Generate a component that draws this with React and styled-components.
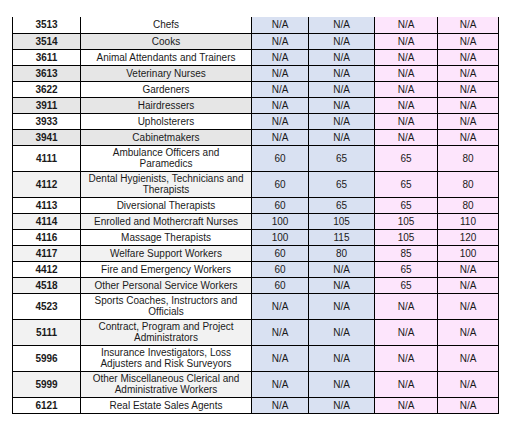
import React from 'react';
import styled, { createGlobalStyle } from 'styled-components';

const GlobalStyle = createGlobalStyle`
  body {
    margin: 0;
    background: #ffffff;
    font-family: 'Liberation Sans', Arial, sans-serif;
  }
`;

const Page = styled.div`
  width: 515px;
  height: 438px;
  padding: 17px 0 0 12px;
  box-sizing: border-box;
  overflow: hidden;
`;

const Table = styled.table`
  border-collapse: collapse;
  table-layout: fixed;
  width: 486px;
  font-size: 10px;
  color: #1a1a1a;
`;

const Col = styled.col`
  width: ${(props) => props.w}px;
`;

const Row = styled.tr`
  height: ${(props) => (props.tall ? '26px' : '16px')};
`;

const Cell = styled.td`
  border: 1px solid #000;
  border-top: ${(props) => (props.first ? 'none' : '1px solid #000')};
  padding: 0 2px;
  line-height: 11px;
  text-align: center;
  vertical-align: middle;
  white-space: nowrap;
  background: ${(props) => props.bg};
`;

const Code = styled(Cell)`
  font-weight: bold;
`;

const widths = [68, 171, 57, 66, 63, 61];

const data = [
  ['3513', ['Chefs'], 'N/A', 'N/A', 'N/A', 'N/A'],
  ['3514', ['Cooks'], 'N/A', 'N/A', 'N/A', 'N/A'],
  ['3611', ['Animal Attendants and Trainers'], 'N/A', 'N/A', 'N/A', 'N/A'],
  ['3613', ['Veterinary Nurses'], 'N/A', 'N/A', 'N/A', 'N/A'],
  ['3622', ['Gardeners'], 'N/A', 'N/A', 'N/A', 'N/A'],
  ['3911', ['Hairdressers'], 'N/A', 'N/A', 'N/A', 'N/A'],
  ['3933', ['Upholsterers'], 'N/A', 'N/A', 'N/A', 'N/A'],
  ['3941', ['Cabinetmakers'], 'N/A', 'N/A', 'N/A', 'N/A'],
  ['4111', ['Ambulance Officers and', 'Paramedics'], '60', '65', '65', '80'],
  ['4112', ['Dental Hygienists, Technicians and', 'Therapists'], '60', '65', '65', '80'],
  ['4113', ['Diversional Therapists'], '60', '65', '65', '80'],
  ['4114', ['Enrolled and Mothercraft Nurses'], '100', '105', '105', '110'],
  ['4116', ['Massage Therapists'], '100', '115', '105', '120'],
  ['4117', ['Welfare Support Workers'], '60', '80', '85', '100'],
  ['4412', ['Fire and Emergency Workers'], '60', 'N/A', '65', 'N/A'],
  ['4518', ['Other Personal Service Workers'], '60', 'N/A', '65', 'N/A'],
  ['4523', ['Sports Coaches, Instructors and', 'Officials'], 'N/A', 'N/A', 'N/A', 'N/A'],
  ['5111', ['Contract, Program and Project', 'Administrators'], 'N/A', 'N/A', 'N/A', 'N/A'],
  ['5996', ['Insurance Investigators, Loss', 'Adjusters and Risk Surveyors'], 'N/A', 'N/A', 'N/A', 'N/A'],
  ['5999', ['Other Miscellaneous Clerical and', 'Administrative Workers'], 'N/A', 'N/A', 'N/A', 'N/A'],
  ['6121', ['Real Estate Sales Agents'], 'N/A', 'N/A', 'N/A', 'N/A'],
];

const BLUE = '#d9e1f2';
const PINK = '#fde5fc';

// early block is a darker grey than the rest of the sheet
const rowShade = (i) => {
  if (i % 2 === 0) return '#ffffff';
  return i < 8 ? '#e6e6e6' : '#f2f2f2';
};

const App = () => (
  <Page>
    <GlobalStyle />
    <Table>
      <colgroup>
        {widths.map((w, i) => (
          <Col key={i} w={w} />
        ))}
      </colgroup>
      <tbody>
        {data.map(([code, name, a, b, c, d], i) => {
          const first = i === 0;
          const shade = rowShade(i);
          return (
            <Row key={code} tall={name.length > 1}>
              <Code first={first} bg={shade}>{code}</Code>
              <Cell first={first} bg={shade}>
                {name.map((line, j) => (
                  <React.Fragment key={j}>
                    {j > 0 && <br />}
                    {line}
                  </React.Fragment>
                ))}
              </Cell>
              <Cell first={first} bg={BLUE}>{a}</Cell>
              <Cell first={first} bg={BLUE}>{b}</Cell>
              <Cell first={first} bg={PINK}>{c}</Cell>
              <Cell first={first} bg={PINK}>{d}</Cell>
            </Row>
          );
        })}
      </tbody>
    </Table>
  </Page>
);

export default App;
